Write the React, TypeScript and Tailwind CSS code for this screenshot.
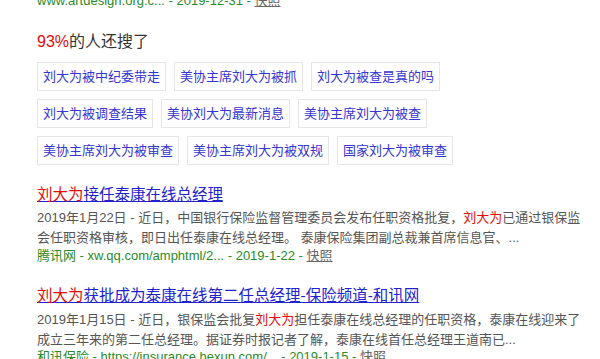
import React from "react";

const FONT = '"Liberation Sans", Arial, "Noto Sans CJK SC", sans-serif';

const rows = [
  ["刘大为被中纪委带走", "美协主席刘大为被抓", "刘大为被查是真的吗"],
  ["刘大为被调查结果", "美协刘大为最新消息", "美协主席刘大为被查"],
  ["美协主席刘大为被审查", "美协主席刘大为被双规", "国家刘大为被审查"],
];

function Red({ children }: { children: React.ReactNode }) {
  return <span className="text-[#e10c0c]">{children}</span>;
}

function Snap() {
  return <span className="text-[#666] underline">快照</span>;
}

export default function App() {
  return (
    <div
      className="w-[600px] h-[359px] overflow-hidden bg-white pl-[37px]"
      style={{ fontFamily: FONT }}
    >
      <div className="mt-[-9px] h-[20px] leading-[20px] text-[13px] text-[#2a8a2a] whitespace-nowrap">
        www.artdesign.org.c... - 2019-12-31 - <Snap />
      </div>

      <div className="mt-[19px] h-[24px] leading-[24px] text-[16px] text-[#333]">
        <span className="text-[#e10c0c]">93%</span>的人还搜了
      </div>

      <div className="mt-[8px] flex flex-col gap-[8px]">
        {rows.map((row, i) => (
          <div key={i} className="flex gap-[8px]">
            {row.map((t) => (
              <div
                key={t}
                className="h-[29px] px-[5px] flex items-center border border-[#e6e6e6] text-[13px] text-[#3535cf] whitespace-nowrap"
              >
                {t}
              </div>
            ))}
          </div>
        ))}
      </div>

      <div className="mt-[19px] h-[22px] leading-[22px] text-[15.5px] whitespace-nowrap">
        <a className="underline text-[#2222cc]">
          <Red>刘大为</Red>接任泰康在线总经理
        </a>
      </div>
      <div className="mt-[2px] text-[13px] leading-[20px] text-[#555] whitespace-nowrap">
        <div>
          2019年1月22日 - 近日，中国银行保险监督管理委员会发布任职资格批复，<Red>刘大为</Red>已通过银保监
        </div>
        <div>会任职资格审核，即日出任泰康在线总经理。 泰康保险集团副总裁兼首席信息官、...</div>
      </div>
      <div className="mt-[-2px] h-[20px] leading-[20px] text-[13px] text-[#2a8a2a] whitespace-nowrap">
        腾讯网 - xw.qq.com/amphtml/2... - 2019-1-22 - <Snap />
      </div>

      <div className="mt-[19px] h-[22px] leading-[22px] text-[15.5px] whitespace-nowrap">
        <a className="underline text-[#2222cc]">
          <Red>刘大为</Red>获批成为泰康在线第二任总经理-保险频道-和讯网
        </a>
      </div>
      <div className="mt-[3px] text-[13px] leading-[20px] text-[#555] whitespace-nowrap">
        <div>
          2019年1月15日 - 近日，银保监会批复<Red>刘大为</Red>担任泰康在线总经理的任职资格，泰康在线迎来了
        </div>
        <div>成立三年来的第二任总经理。据证券时报记者了解，泰康在线首任总经理王道南已...</div>
      </div>
      <div className="mt-[-3px] h-[20px] leading-[20px] text-[13px] text-[#2a8a2a] whitespace-nowrap">
        和讯保险 - https://insurance.hexun.com/... - 2019-1-15 - <Snap />
      </div>
    </div>
  );
}
